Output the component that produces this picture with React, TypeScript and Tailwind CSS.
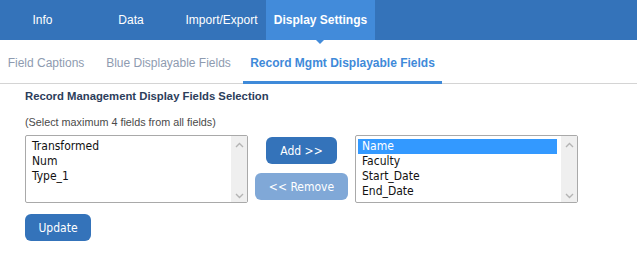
import React from "react";

const topTabs = [
  { label: "Info", width: "w-[85px]" },
  { label: "Data", width: "w-[92px]" },
  { label: "Import/Export", width: "w-[89px]" },
];

const subTabs = [
  { label: "Field Captions", width: "w-[96px]" },
  { label: "Blue Displayable Fields", width: "w-[147px]" },
];

function Chevron({ up }: { up?: boolean }) {
  return (
    <svg width="9" height="6" viewBox="0 0 9 6" className="text-[#b4b4b4]">
      <path
        d={up ? "M1 5 L4.5 1.5 L8 5" : "M1 1 L4.5 4.5 L8 1"}
        fill="none"
        stroke="currentColor"
        strokeWidth="1.4"
      />
    </svg>
  );
}

function ListBox({ items, selected }: { items: string[]; selected?: string }) {
  return (
    <div className="flex h-[68px] w-[223px] rounded-[2px] border border-[#a9a9a9] bg-white">
      <ul className="flex-1 pl-[2px] pt-[3px] text-[12px] leading-[15px] text-[#111] [font-family:'DejaVu_Sans_Condensed','DejaVu_Sans',sans-serif]">
        {items.map((item) => (
          <li
            key={item}
            className={
              item === selected
                ? "bg-[#3399ff] pl-[4px] text-white"
                : "pl-[4px]"
            }
          >
            {item}
          </li>
        ))}
      </ul>
      <div className="flex w-[16px] ml-[4px] flex-col items-center justify-between bg-[#efefef] pb-[3px] pt-[6px]">
        <Chevron up />
        <Chevron />
      </div>
    </div>
  );
}

export default function App() {
  return (
    <div className="h-[258px] w-[637px] bg-white [font-family:'Liberation_Sans',Arial,sans-serif]">
      <nav className="flex h-[40px] bg-[#3473ba] text-[12px] text-white">
        {topTabs.map((tab) => (
          <div key={tab.label} className={`${tab.width} flex items-center justify-center`}>
            {tab.label}
          </div>
        ))}
        <div className="relative flex w-[109px] items-center justify-center bg-[#428bda] font-bold">
          Display Settings
          <span className="absolute left-[50px] top-[40px] h-0 w-0 border-x-[4px] border-t-[4px] border-x-transparent border-t-[#428bda]" />
        </div>
      </nav>

      <div className="flex h-[44px] border-b border-[#d4d4d4] text-[12px]">
        <div className="ml-[-2px] flex gap-px">
          {subTabs.map((t) => (
            <div
              key={t.label}
              className={`${t.width} flex items-center justify-center pt-[2px] text-[#8e9bb0]`}
            >
              {t.label}
            </div>
          ))}
          <div className="mb-[-1px] flex w-[199px] items-center justify-center border-b-[3px] border-[#3f8ad9] pt-[4px] font-bold text-[#3f8ad9]">
            Record Mgmt Displayable Fields
          </div>
        </div>
      </div>

      <div className="pl-[25px] pt-[5px]">
        <h2 className="text-[11.3px] font-bold leading-[14px] text-[#2c3d5b]">
          Record Management Display Fields Selection
        </h2>
        <p className="mt-[12px] text-[10.8px] leading-[14px] text-[#4a4a4a]">
          (Select maximum 4 fields from all fields)
        </p>

        <div className="mt-[6px] flex">
          <ListBox items={["Transformed", "Num", "Type_1"]} />
          <div className="flex w-[107px] flex-col items-center gap-[9px] pt-[2px] text-[12px] text-white [font-family:'DejaVu_Sans_Condensed','DejaVu_Sans',sans-serif]">
            <button className="h-[27px] w-[71px] rounded-[6px] bg-[#3473ba]">
              Add &gt;&gt;
            </button>
            <button className="h-[27px] w-[93px] rounded-[6px] bg-[#80a8d7]">
              &lt;&lt; Remove
            </button>
          </div>
          <ListBox
            items={["Name", "Faculty", "Start_Date", "End_Date"]}
            selected="Name"
          />
        </div>

        <button className="mt-[11px] h-[27px] w-[66px] rounded-[6px] bg-[#3473ba] text-[12px] text-white [font-family:'DejaVu_Sans_Condensed','DejaVu_Sans',sans-serif]">
          Update
        </button>
      </div>
    </div>
  );
}
